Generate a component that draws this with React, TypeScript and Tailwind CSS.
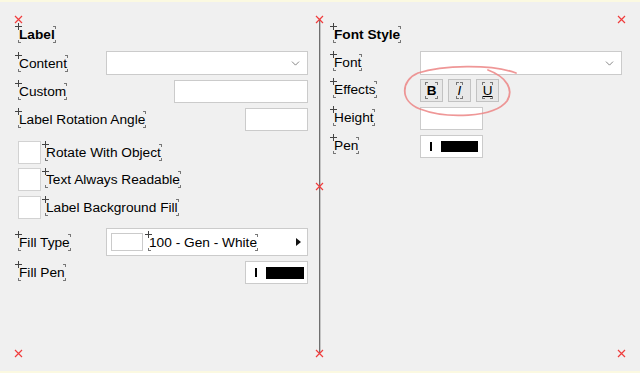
import { ChevronDown } from "lucide-react";

// layout marker around a text element: a cross at the top-left, ticks at the other corners
const Mark = ({
  children,
  plus = true,
  className,
}: {
  children: React.ReactNode;
  plus?: boolean;
  className?: string;
}) => (
  <span className={"relative inline-block leading-[15px] " + (className ?? "")}>
    {plus && (
      <>
        <span className="absolute -left-[4px] -top-[1px] w-[7px] h-[1px] bg-[#444]" />
        <span className="absolute -left-[1px] -top-[4px] w-[1px] h-[7px] bg-[#444]" />
      </>
    )}
    {!plus && (
      <span className="absolute -left-[1px] -top-[1px] w-[3px] h-[3px] border-l border-t border-[#777]" />
    )}
    <span className="absolute -right-[1px] -top-[1px] w-[3px] h-[3px] border-r border-t border-[#777]" />
    <span className="absolute -left-[1px] -bottom-[1px] w-[3px] h-[3px] border-l border-b border-[#777]" />
    <span className="absolute -right-[1px] -bottom-[1px] w-[3px] h-[3px] border-r border-b border-[#777]" />
    {children}
  </span>
);

const XMark = ({ x, y }: { x: number; y: number }) => (
  <svg
    className="absolute"
    style={{ left: x - 4, top: y - 4 }}
    width={9}
    height={9}
    viewBox="0 0 9 9"
  >
    <path d="M1 1 L8 8 M8 1 L1 8" stroke="#f03c3c" strokeWidth={1.2} />
  </svg>
);

const Dropdown = ({ className }: { className?: string }) => (
  <div
    className={
      "h-[24px] bg-white border border-[#cbcbcb] flex items-center justify-end pr-[5px] " +
      (className ?? "")
    }
  >
    <ChevronDown className="w-[13px] h-[13px] text-[#555]" strokeWidth={1.3} />
  </div>
);

const TextBox = ({ className }: { className?: string }) => (
  <div className={"h-[23px] bg-white border border-[#cbcbcb] " + (className ?? "")} />
);

const PenBox = ({ small = false }: { small?: boolean }) => (
  <div className="w-[63px] h-[23px] bg-white border border-[#cbcbcb] flex items-center pl-[9px]">
    <div className="w-[2px] h-[9px] bg-black" />
    <div
      className={
        small
          ? "ml-[9px] w-[37px] h-[11px] bg-black"
          : "ml-[9px] w-[38px] h-[12px] bg-black"
      }
    />
  </div>
);

const CheckRow = ({ label, className }: { label: string; className?: string }) => (
  <div className={"flex items-center h-[23px] " + (className ?? "")}>
    <div className="w-[23px] h-[23px] bg-white border border-[#d2d2d2]" />
    <Mark className="ml-[5px]">{label}</Mark>
  </div>
);

const EffectButton = ({ children }: { children: React.ReactNode }) => (
  <div className="w-[23px] h-[23px] bg-[#e8e8e8] border border-[#c2c2c2] flex items-center justify-center">
    {children}
  </div>
);

export default function App() {
  return (
    <div className="relative w-[640px] h-[373px] bg-[#f0f0f0] border-t-2 border-b-2 border-[#fbf9e1] font-['Liberation_Sans',Arial,sans-serif] text-[13.7px] text-black overflow-hidden">
      <div className="flex pt-[17px]">
        {/* Label panel */}
        <div className="ml-[18px] w-[290px] pt-[3px] flex flex-col">
          <div className="h-[24px] flex items-center pl-[1px]">
            <Mark className="font-bold">Label</Mark>
          </div>
          <div className="mt-[5px] h-[24px] flex items-center justify-between pl-[1px]">
            <Mark>Content</Mark>
            <Dropdown className="w-[202px]" />
          </div>
          <div className="mt-[5px] h-[23px] flex items-center justify-between pl-[1px]">
            <Mark>Custom</Mark>
            <TextBox className="w-[134px]" />
          </div>
          <div className="mt-[5px] h-[23px] flex items-center justify-between pl-[1px]">
            <Mark>Label Rotation Angle</Mark>
            <TextBox className="w-[63px]" />
          </div>
          <CheckRow label="Rotate With Object" className="mt-[10px]" />
          <CheckRow label="Text Always Readable" className="mt-[4px]" />
          <CheckRow label="Label Background Fill" className="mt-[5px]" />
          <div className="mt-[9px] h-[28px] flex items-center justify-between pl-[1px]">
            <Mark>Fill Type</Mark>
            <div className="w-[202px] h-[28px] bg-white border border-[#cbcbcb] flex items-center pl-[4px] pr-[6px]">
              <div className="w-[32px] h-[18px] bg-white border border-[#cbcbcb]" />
              <Mark className="ml-[6px]">100 - Gen - White</Mark>
              <svg className="ml-auto" width={5} height={8} viewBox="0 0 5 8">
                <path d="M0 0 L5 4 L0 8 Z" fill="#111" />
              </svg>
            </div>
          </div>
          <div className="mt-[5px] h-[23px] flex items-center justify-between pl-[1px]">
            <Mark>Fill Pen</Mark>
            <PenBox />
          </div>
        </div>

        {/* divider */}
        <div className="ml-[11px] h-[334px] w-[2px] flex">
          <div className="w-[1px] bg-[#6f6f6f]" />
          <div className="w-[1px] bg-[#c4c4c4]" />
        </div>

        {/* Font style panel */}
        <div className="ml-[13px] w-[288px] pt-[3px] flex flex-col">
          <div className="h-[24px] flex items-center">
            <Mark className="font-bold">Font Style</Mark>
          </div>
          <div className="mt-[5px] h-[24px] flex items-center">
            <div className="w-[86px]">
              <Mark>Font</Mark>
            </div>
            <Dropdown className="w-[202px]" />
          </div>
          <div className="mt-[4px] h-[23px] flex items-center">
            <div className="w-[86px]">
              <Mark>Effects</Mark>
            </div>
            <div className="flex gap-[5px]">
              <EffectButton>
                <Mark plus={false} className="font-bold text-[13.5px] px-[1px]">B</Mark>
              </EffectButton>
              <EffectButton>
                <Mark plus={false} className="italic text-[13.5px] px-[1px]">I</Mark>
              </EffectButton>
              <EffectButton>
                <Mark plus={false} className="underline text-[13.5px]">U</Mark>
              </EffectButton>
            </div>
          </div>
          <div className="mt-[5px] h-[23px] flex items-center">
            <div className="w-[86px]">
              <Mark>Height</Mark>
            </div>
            <TextBox className="w-[63px]" />
          </div>
          <div className="mt-[5px] h-[23px] flex items-center">
            <div className="w-[86px]">
              <Mark>Pen</Mark>
            </div>
            <PenBox small />
          </div>
        </div>
      </div>

      {/* canvas markers */}
      <XMark x={18} y={17} />
      <XMark x={319} y={17} />
      <XMark x={621} y={17} />
      <XMark x={319} y={184} />
      <XMark x={18} y={351} />
      <XMark x={319} y={351} />
      <XMark x={621} y={351} />

      {/* hand-drawn annotation */}
      <svg className="absolute left-0 -top-[2px] pointer-events-none" width={640} height={373}>
        <path
          d="M516 73 C 492 64, 442 65, 418 73 C 401 80, 399 101, 420 109 C 446 119, 494 118, 507 101 C 514 90, 507 77, 488 70"
          fill="none"
          stroke="#ec8585"
          strokeOpacity={0.85}
          strokeWidth={1.8}
          strokeLinecap="round"
        />
      </svg>
    </div>
  );
}
